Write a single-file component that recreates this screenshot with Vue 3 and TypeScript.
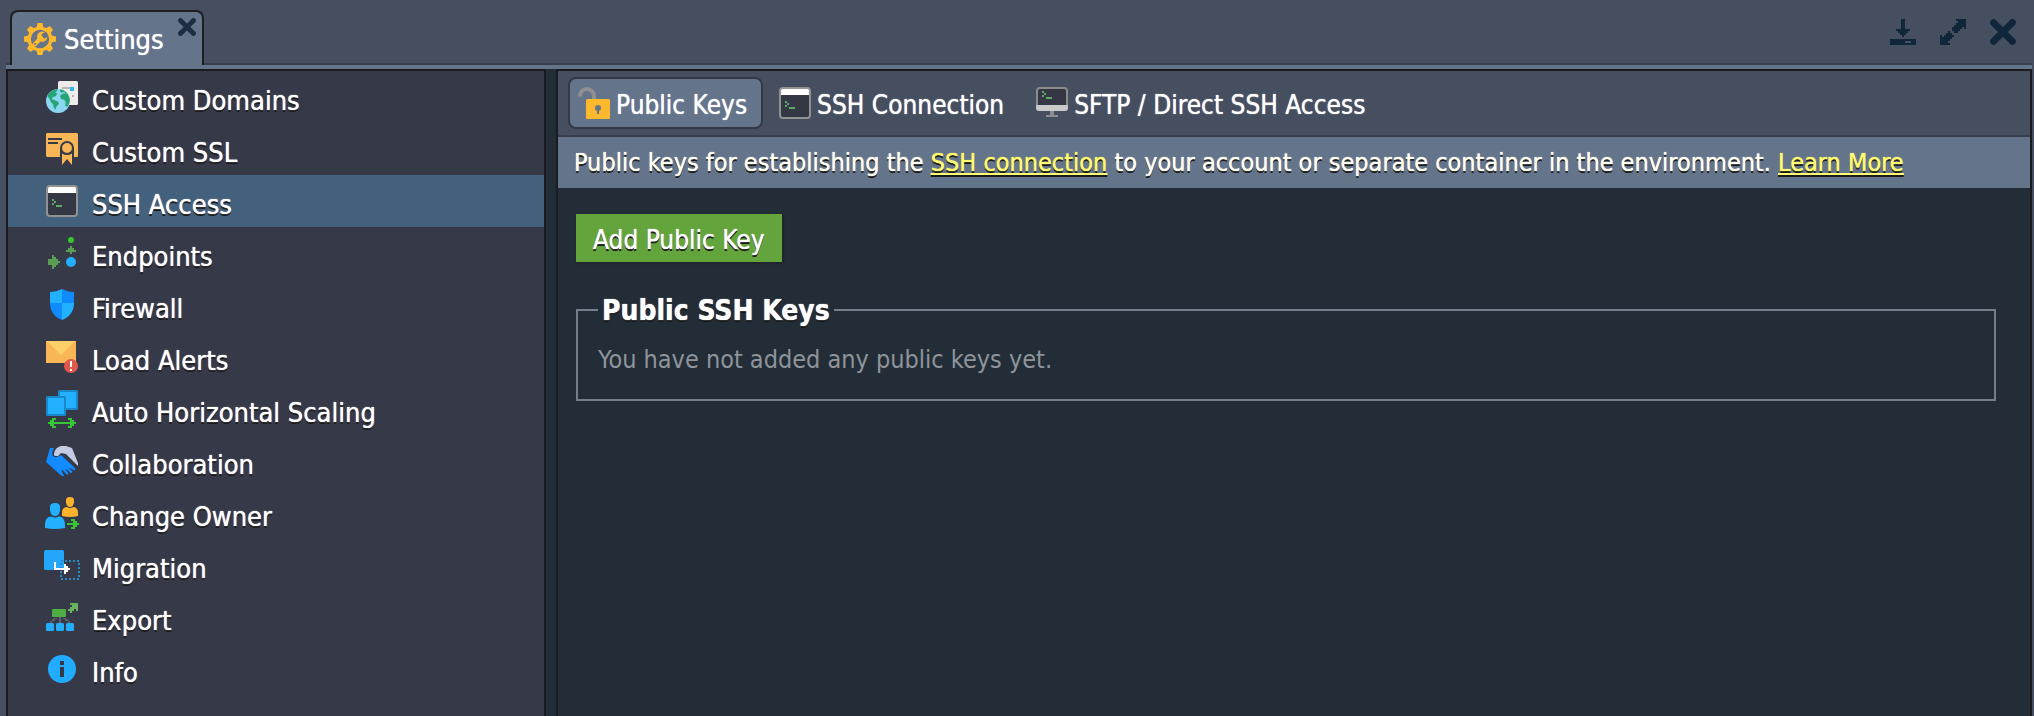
<script setup lang="ts">
import { ref } from 'vue'

interface Entry {
  label: string
  icon: string
  w: number
  h: number
}

const sections: Entry[] = [
  { label: 'Custom Domains', icon: 'domains', w: 32, h: 32 },
  { label: 'Custom SSL', icon: 'ssl', w: 32, h: 32 },
  { label: 'SSH Access', icon: 'terminal', w: 32, h: 32 },
  { label: 'Endpoints', icon: 'endpoints', w: 32, h: 32 },
  { label: 'Firewall', icon: 'firewall', w: 32, h: 32 },
  { label: 'Load Alerts', icon: 'alerts', w: 32, h: 32 },
  { label: 'Auto Horizontal Scaling', icon: 'scaling', w: 32, h: 38 },
  { label: 'Collaboration', icon: 'handshake', w: 32, h: 32 },
  { label: 'Change Owner', icon: 'owner', w: 34, h: 32 },
  { label: 'Migration', icon: 'migration', w: 36, h: 30 },
  { label: 'Export', icon: 'export', w: 32, h: 28 },
  { label: 'Info', icon: 'info', w: 28, h: 28 },
]

const tabs: Entry[] = [
  { label: 'Public Keys', icon: 'lock', w: 32, h: 32 },
  { label: 'SSH Connection', icon: 'terminal', w: 32, h: 32 },
  { label: 'SFTP / Direct SSH Access', icon: 'monitor', w: 32, h: 32 },
]

const section = ref('SSH Access')
const tab = ref('Public Keys')
</script>

<template>
  <div class="window">
    <svg class="sprite" aria-hidden="true">
      <symbol id="gear" viewBox="0 0 32 32">
        <g fill="#fdb82c">
          <path d="M12.5 5 13.5 0h5l1 5v22l-1 5h-5l-1-5z" />
          <path d="M12.5 5 13.5 0h5l1 5v22l-1 5h-5l-1-5z" transform="rotate(45 16 16)" />
          <path d="M12.5 5 13.5 0h5l1 5v22l-1 5h-5l-1-5z" transform="rotate(90 16 16)" />
          <path d="M12.5 5 13.5 0h5l1 5v22l-1 5h-5l-1-5z" transform="rotate(135 16 16)" />
          <circle cx="16" cy="16" r="12.5" />
        </g>
        <circle cx="16" cy="16" r="9.2" fill="#64748b" />
        <path d="M10.5 21.5 17 15" stroke="#fdb82c" stroke-width="4.2" stroke-linecap="round" />
        <path d="M21 9.2a5.2 5.2 0 1 0 2.4 5l-3 1.2-3-2.2.6-2.4z" fill="#fdb82c" />
        <circle cx="11" cy="21" r="1" fill="#64748b" />
      </symbol>
      <symbol id="cross" viewBox="0 0 26 26">
        <path d="M3.6 3.6 22.4 22.4M22.4 3.6 3.6 22.4" stroke="currentColor" stroke-width="7" stroke-linecap="round" />
      </symbol>
      <symbol id="minimize" viewBox="0 0 26 26">
        <path fill="currentColor" d="M11 0h4v10h5v2h-2v2h-2v2h-2v2h-2v-2h-2v-2H8v-2H6v-2h5z" />
        <path fill="currentColor" fill-rule="evenodd" d="M0 20h26v6H0zM15 22v2h6v-2z" />
      </symbol>
      <symbol id="expand" viewBox="0 0 26 26">
        <path fill="currentColor" d="M16 0h10v10h-2V8h-2v2h-2v2h-2v2h-4v-2h-2V8h2V6h2V4h2V2h-2z" />
        <path fill="currentColor" d="M0 16h2v2h2v-2h2v-2h2v-2h2v2h2v2h2v2h-2v2h-2v2H8v2h2v2H0z" />
      </symbol>
      <symbol id="domains" viewBox="0 0 32 32">
        <rect x="12" width="20" height="24" rx="1.5" fill="#efebea" />
        <path d="M16 6h8v2h-8zM26 14h2v2h-2z" fill="#b9b6b7" />
        <path d="M24 6h4v4h-4z" fill="#2cb8ea" />
        <circle cx="12" cy="20" r="12" fill="#8bd7f2" />
        <g fill="#27a576">
          <path d="M1.2 15C3 11.5 6.5 8.7 11 8l.6 1.800-2.500 1.400 2.400 1.600-2.200 2.800-2.500.4-.8 2.600 2 .2 3.800 1.800 1.200 2.400-2.400 2.200-1.200 3.600-1.600-2-.8-3.600-2.200-2.200-1-2.800z" />
          <path d="M14.5 8.3c5 1 9 5.500 9.400 10.700-.2 2.600-1 4.600-2.600 6.800l-2.200-1 .6-3.400-1.400-2.600-3.400-.8-.8-3.600 3-1.800 2.600.2-1.600-1.800-3 .6-1.400-1.400z" />
        </g>
      </symbol>
      <symbol id="ssl" viewBox="0 0 32 32">
        <path fill="#f8b656" d="M1 0h30l1 1v22l-1 1H1l-1-1V1z" />
        <path fill="#363948" d="M2 5h14v2H2zM2 9h10v2H2zM14 15h14v9h2v8H14z" />
        <circle cx="21" cy="15" r="7" fill="#363948" />
        <circle cx="21" cy="15" r="5" fill="#f8b656" />
        <path fill="#f8b656" d="M28 18h4v5l-1 1h-3zM16 20.5q5 3 10 0V32l-5-6-5 6z" />
      </symbol>
      <symbol id="terminal" viewBox="0 0 32 32">
        <rect x="1" y="1" width="30" height="30" rx="3" fill="#333844" stroke="#929292" stroke-width="2" />
        <path fill="#fff" d="M2 8V3l1-1h26l1 1v5z" />
        <path fill="#5bab63" d="M6 14h2v2h2v2H8v2H6v-2h2v-2H6zM10 20h6v2h-6z" />
      </symbol>
      <symbol id="endpoints" viewBox="0 0 32 32">
        <circle cx="25" cy="3" r="3" fill="#38c632" />
        <path fill="#5a9e54" d="M24 9h2v2h2v2h2v2h-4v2h-2v-2h-4v-2h2v-2h2z" />
        <circle cx="25" cy="25" r="5" fill="#22adff" />
        <path fill="#5a9e54" d="M2 22h4v-4h2v2h2v2h2v2h2v2h-2v2h-2v2H8v2H6v-4H2z" />
      </symbol>
      <symbol id="firewall" viewBox="0 0 32 32">
        <path fill="#22b1ff" d="M16 0C12 2 8 3 4 3v11h12z" />
        <path fill="#108aff" d="M16 0c4 2 8 3 12 3v11H16z" />
        <path fill="#108aff" d="M4 14h12v17C10 28.5 4 24 4 14z" />
        <path fill="#22b1ff" d="M28 14H16v17c6-2.500 12-7 12-17z" />
      </symbol>
      <symbol id="alerts" viewBox="0 0 32 32">
        <path fill="#f8b656" d="M0 0h30v22H0z" />
        <path fill="#ffd067" d="M1 0h28L15 14z" />
        <circle cx="25" cy="25" r="7" fill="#e0574c" />
        <path fill="#fff" d="M24 20h2v6h-2zM24 28h2v2h-2z" />
      </symbol>
      <symbol id="scaling" viewBox="0 0 32 38">
        <g fill="#22b0ff" stroke="#1987c8" stroke-width="2">
          <rect x="13" y="1" width="18" height="18" rx="0.5" />
          <rect x="1" y="7" width="18" height="18" rx="0.5" />
        </g>
        <path fill="#35c636" d="M6 28h4v2H8v2h16v-2h-2v-2h4v2h2v2h2v2h-2v2h-2v2h-4v-2h2v-2H8v2h2v2H6v-2H4v-2H2v-2h2v-2h2z" />
      </symbol>
      <symbol id="handshake" viewBox="0 0 32 32">
        <path fill="#118bff" d="M4 3h4L7 5c-2 4 0 8 4 7l4-2 14 13q1 2-1 2.500l-4-2.500-.6.600 3 3q0 1.800-2 1.400l-4-4-.8.800 3 3.400q-.4 1.800-2 1.200l-4.200-4.400-.8.800L18 31q-2 .6-4-1.400L0 17z" />
        <path fill="#c5cbe2" d="M8 10C8 5 11 2 15 1h5l6 2 6 15v3L20 9l-5-1-3 3H9z" />
      </symbol>
      <symbol id="owner" viewBox="0 0 34 32">
        <g fill="#fdb22e">
          <path d="M21 3q0-3 4-3t4 3v2.500Q28 10 25 10t-4-4.500z" />
          <path d="M17 16c0-4 2-6 5-6q3 2 6 0c3 0 5 2 5 6v3q-8 2-16 0z" />
        </g>
        <g fill="#22b0ff">
          <path d="M5 10q0-4 5-4t5 4v3.500Q14 19 10 19t-5-5.500z" />
          <path d="M0 28c0-5 2-8 6-8.500q4 2 8 0c4 .5 6 3.500 6 8.500v3q-10 2-20 0z" />
        </g>
        <path fill="#35c636" d="M22 26h6v-2h-2v-2h4v2h2v2h2v2h-2v2h-2v2h-4v-2h2v-2h-6z" />
      </symbol>
      <symbol id="migration" viewBox="0 0 36 30">
        <rect width="20" height="20" rx="1.5" fill="#24a7fa" />
        <rect x="17" y="11" width="18" height="18" fill="none" stroke="#278cc8" stroke-width="2" stroke-dasharray="2 2" />
        <path fill="#fff" d="M10 12h2v6h8v-4h2v2h2v2h2v2h-2v2h-2v2h-2v-4H10z" />
      </symbol>
      <symbol id="export" viewBox="0 0 32 28">
        <rect x="6" y="6" width="14" height="8" rx="1" fill="#4ead45" />
        <path fill="#5e616d" d="M13 14h2v6h-2zM8 15h3v1H8zM6 16h3v2H6zM4 18h2v2H4zM17 15h3v1h-3zM19 16h3v2h-3zM22 18h2v2h-2z" />
        <g fill="#22adff">
          <rect y="20" width="8" height="8" rx="1.5" />
          <rect x="10" y="20" width="8" height="8" rx="1.5" />
          <rect x="20" y="20" width="8" height="8" rx="1.5" />
        </g>
        <path fill="#67b35d" d="M24 0h8v8h-2V6h-2v2h-2v2h-2V8h-2V6h2V4h2V2h-2zM22 6h2v2h2v2h-2V8h-2z" />
      </symbol>
      <symbol id="info" viewBox="0 0 28 28">
        <circle cx="14" cy="14" r="14" fill="#22acff" />
        <path fill="#363948" d="M12 6h4v4h-4zM12 12h4v10h-4z" />
      </symbol>
      <symbol id="lock" viewBox="0 0 32 32">
        <path d="M2 9.5V9a7 7 0 0 1 14 0v4" fill="none" stroke="#909091" stroke-width="4" />
        <rect x="8" y="12" width="24" height="20" rx="1.5" fill="#fdb92e" />
        <circle cx="20" cy="21" r="3" fill="#64748b" />
        <path fill="#64748b" d="M19 22h2v5h-2z" />
      </symbol>
      <symbol id="monitor" viewBox="0 0 32 32">
        <rect x="1" y="1" width="30" height="22" rx="3" fill="#333844" stroke="#8c8c8c" stroke-width="2" />
        <path fill="#c9c9c9" d="M0 18h32v3q0 3-3 3H3q-3 0-3-3z" />
        <path fill="#8e8e8e" d="M14 24h4v4h4v2H10v-2h4z" />
        <path fill="#5bab63" d="M6 4h2v2h2v2H8v2H6V8h2V6H6zM10 10h6v2h-6z" />
      </symbol>
    </svg>

    <header class="titlebar">
      <div class="title-tab">
        <svg class="gear" width="32" height="32" aria-hidden="true"><use href="#gear" /></svg>
        <h1>Settings</h1>
        <button class="tool tab-close" type="button" aria-label="Close tab">
          <svg width="18" height="18"><use href="#cross" /></svg>
        </button>
      </div>
      <div class="tools">
        <button class="tool" type="button" aria-label="Minimize">
          <svg width="26" height="26"><use href="#minimize" /></svg>
        </button>
        <button class="tool" type="button" aria-label="Expand">
          <svg width="26" height="26"><use href="#expand" /></svg>
        </button>
        <button class="tool" type="button" aria-label="Close">
          <svg width="26" height="26"><use href="#cross" /></svg>
        </button>
      </div>
    </header>

    <div class="body">
      <nav class="sidebar" aria-label="Settings sections">
        <button
          v-for="item in sections"
          :key="item.label"
          type="button"
          class="item"
          :class="{ active: item.label === section }"
          @click="section = item.label"
        >
          <span class="item-icon">
            <svg :width="item.w" :height="item.h" aria-hidden="true"><use :href="'#' + item.icon" /></svg>
          </span>
          <span class="item-label">{{ item.label }}</span>
        </button>
      </nav>

      <main class="content">
        <div class="tabs" role="tablist">
          <button
            v-for="item in tabs"
            :key="item.label"
            type="button"
            role="tab"
            class="tab"
            :class="{ active: item.label === tab }"
            :aria-selected="item.label === tab"
            @click="tab = item.label"
          >
            <svg :width="item.w" :height="item.h" aria-hidden="true"><use :href="'#' + item.icon" /></svg>
            <span class="tab-label">{{ item.label }}</span>
          </button>
        </div>
        <p class="banner">
          Public keys for establishing the <a href="#ssh-connection">SSH connection</a> to your account or separate
          container in the environment. <a href="#learn-more">Learn More</a>
        </p>
        <div class="panel">
          <button class="add" type="button">Add Public Key</button>
          <fieldset class="keys">
            <legend>Public SSH Keys</legend>
            <p>You have not added any public keys yet.</p>
          </fieldset>
        </div>
      </main>
    </div>
  </div>
</template>

<style>
body {
  margin: 0;
  background: #465062;
}
</style>

<style scoped>
.window {
  box-sizing: border-box;
  min-height: 100vh;
  display: flex;
  flex-direction: column;
  padding: 0 2px 0 6px;
  background: #464f60;
  color: #fff;
  font-family: "DejaVu Sans Condensed", "Noto Sans", sans-serif;
  font-size: 26px;
  line-height: 32px;
  text-shadow: 0 0 1px currentColor;
}

.window * {
  box-sizing: border-box;
}

button {
  font: inherit;
  color: inherit;
  text-shadow: inherit;
  background: none;
  border: 0;
  padding: 0;
  margin: 0;
  cursor: pointer;
}

svg {
  display: block;
  flex: none;
}

.sprite {
  position: absolute;
  width: 0;
  height: 0;
}

.titlebar {
  display: flex;
  justify-content: space-between;
  align-items: flex-start;
  height: 69px;
  padding-left: 4px;
  background: linear-gradient(#464f60 63px, #373e4e 63px, #373e4e 65px, #64748b 65px);
}

.title-tab {
  display: flex;
  align-items: flex-start;
  height: 55px;
  margin-top: 10px;
  padding: 6px 6px 0 12px;
  border: 2px solid #1c1e22;
  border-bottom: 0;
  border-radius: 8px 8px 0 0;
  background: #64748b;
}

.gear {
  margin-top: 5px;
}

h1 {
  margin: 5px 14px 0 8px;
  font-size: 27px;
  line-height: 34px;
  font-weight: 400;
}

.tools {
  display: flex;
  gap: 24px;
  padding: 19px 16px 0 0;
}

.tool {
  color: #10263a;
}

.tab-close {
  color: #1d2d42;
}

.body {
  flex: 1;
  display: flex;
  gap: 10px;
  background: #232d37;
}

.sidebar {
  flex: none;
  width: 540px;
  border: 2px solid #1a1b1f;
  border-bottom: 0;
  background: #363948;
}

.item {
  display: flex;
  align-items: center;
  gap: 12px;
  width: 100%;
  height: 52px;
  padding-left: 36px;
  font-size: 27px;
  text-align: left;
}

.item,
.banner,
.add,
.keys legend {
  text-shadow: 0 0 1px currentColor, 0 2px 0 #1a1a1a;
}

.item.active {
  background: #43607d;
}

.item-label {
  padding-top: 8px;
}

.item-icon {
  display: flex;
  justify-content: center;
  width: 36px;
}

.content {
  flex: 1;
  min-width: 0;
  border: 2px solid #1a1b1f;
  border-bottom: 0;
}

.tabs {
  display: flex;
  gap: 6px;
  height: 66px;
  padding: 6px 10px;
  border-bottom: 2px solid #373e4e;
  background: #464f60;
}

.tab {
  display: flex;
  align-items: center;
  gap: 6px;
  height: 52px;
  padding: 0 14px 0 8px;
  border: 2px solid transparent;
  border-radius: 8px;
}

.tab-label {
  padding-top: 4px;
}

.tab.active {
  border-color: #333945;
  background: #64748b;
}

.banner {
  margin: 0;
  padding: 10px 16px 9px;
  background: #64748b;
  color: #fffff2;
  font-size: 25px;
}

.banner a {
  color: #fffb72;
  text-decoration-thickness: 2px;
  text-underline-offset: 2px;
}

.panel {
  padding: 26px 34px 26px 18px;
}

.add {
  display: block;
  height: 48px;
  padding: 4px 17px 0;
  background: #63a43d;
  box-shadow: 1px 1px 2px #1a1f24;
}

.keys {
  margin: 31px 0 0;
  padding: 17px 20px 23px;
  border: 2px solid #757e8d;
  min-width: 0;
}

.keys legend {
  padding: 2px 4px 0;
  font-size: 28px;
  font-weight: 700;
}

.keys p {
  margin: 0;
  color: #8f949b;
  font-size: 25px;
  text-shadow: none;
}
</style>
